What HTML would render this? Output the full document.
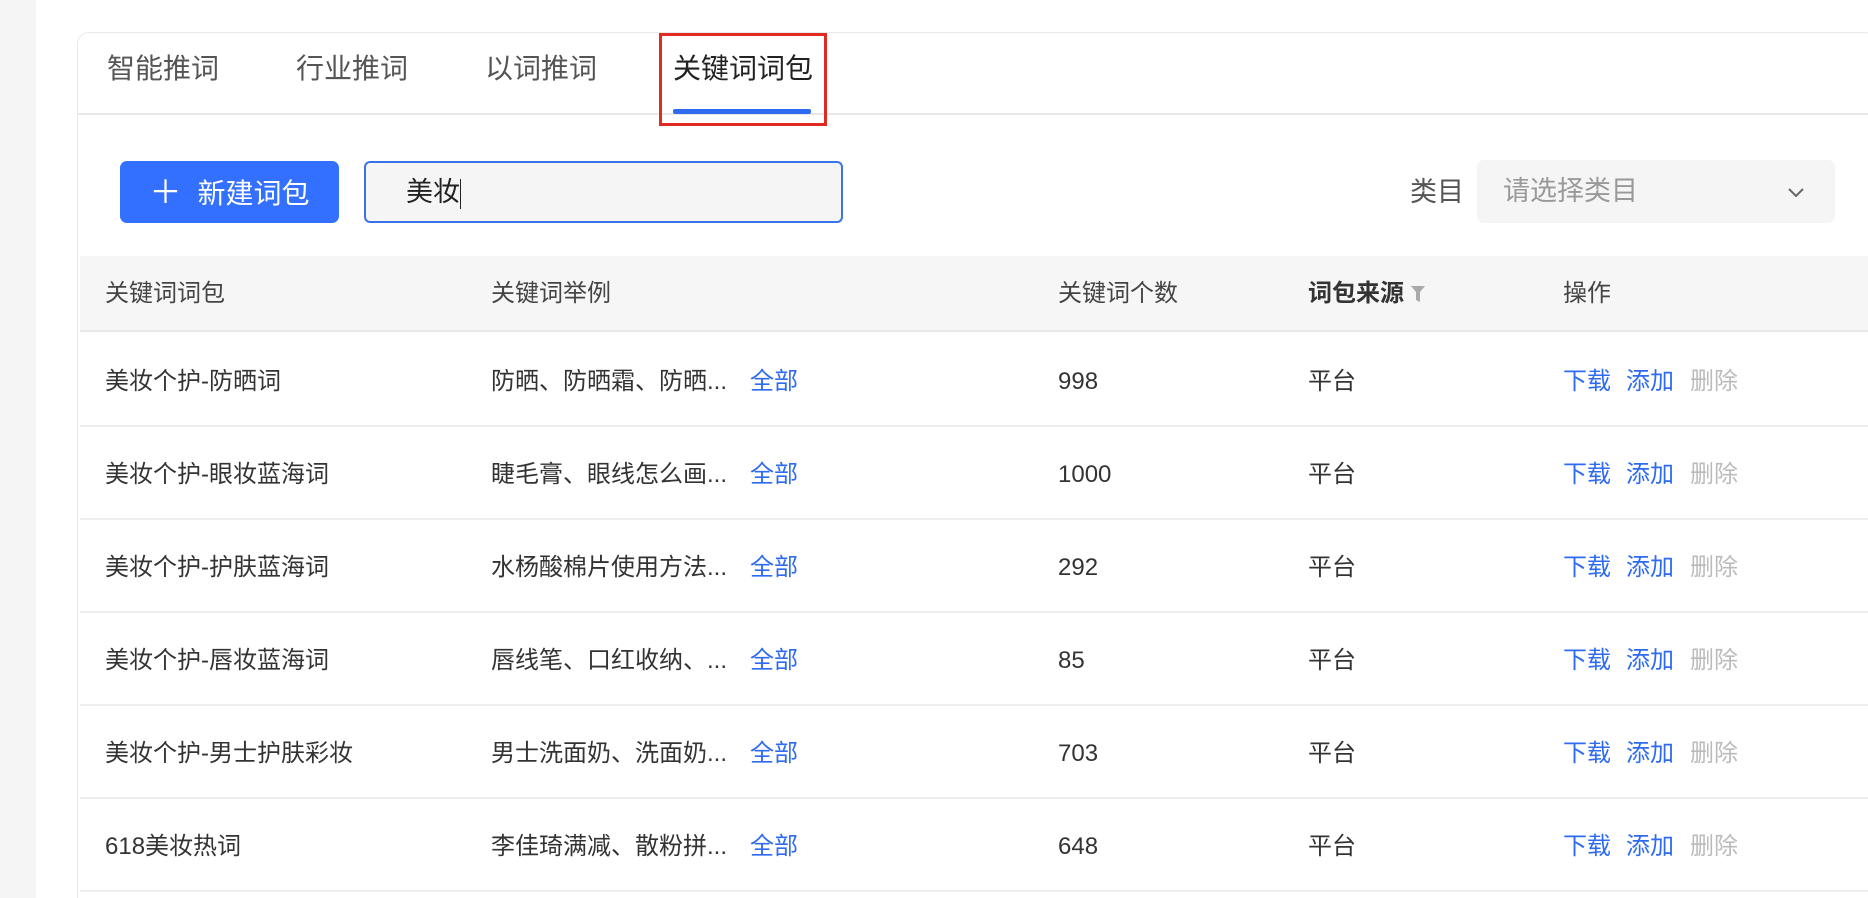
<!DOCTYPE html>
<html style="overflow:hidden;height:898px"><head><meta charset="utf-8"><style>
*{margin:0;padding:0;box-sizing:border-box}
body{width:1868px;height:898px;background:#fff;font-family:"Liberation Sans","Noto Sans CJK SC",sans-serif;color:#333;position:relative;overflow:hidden}
.abs{position:absolute}
.strip{left:0;top:0;width:36px;height:898px;background:#f5f5f5}
.card{left:77px;top:32px;width:1800px;height:866px;border:1.5px solid #eaeaea;border-bottom:none;border-radius:12px 12px 0 0;background:#fff}
.tab{top:49px;font-size:28px;color:#555;line-height:40px}
.tabline{left:78px;top:113px;width:1800px;height:2px;background:#e8e8e8}
.ul{left:673px;top:109px;width:138px;height:5px;background:#2f6bf0;border-radius:2px}
.red{left:659px;top:33px;width:168px;height:93px;border:3px solid #e02a22}
.btn{left:120px;top:161px;width:219px;height:62px;background:#3370ff;border-radius:7px;color:#fff;font-size:28px;line-height:62px;text-align:center}
.inp{left:364px;top:161px;width:479px;height:62px;background:#f5f5f5;border:2px solid #3a72e8;border-radius:6px;font-size:27px;line-height:58px;padding-left:40px;color:#222}
.sel{left:1477px;top:160px;width:358px;height:63px;background:#f5f5f5;border-radius:7px;font-size:27px;line-height:63px;padding-left:26px;color:#999}
.th{left:80px;top:256px;width:1800px;height:76px;background:#f6f6f6;border-bottom:2px solid #e8e8e8}
.h{top:278px;font-size:24px;color:#444;line-height:32px}
.c{font-size:24px;line-height:32px;color:#333}
.row{left:80px;width:1800px;height:2px;background:#eeeeee}
.b{color:#2f6bf0}.g{color:#bbb}
</style></head><body>
<div class="abs strip"></div>
<div class="abs card"></div>
<div class="abs tab" style="left:107px">智能推词</div>
<div class="abs tab" style="left:296px">行业推词</div>
<div class="abs tab" style="left:485px">以词推词</div>
<div class="abs tab" style="left:673px;color:#222">关键词词包</div>
<div class="abs tabline"></div>
<div class="abs ul"></div>
<div class="abs red"></div>
<div class="abs btn"><span style="font-size:32px;margin-right:16px">＋</span>新建词包</div>
<div class="abs inp">美妆<span style="display:inline-block;width:1px;height:30px;background:#222;vertical-align:middle"></span></div>
<div class="abs" style="left:1410px;top:176px;font-size:27px;line-height:32px;color:#555">类目</div>
<div class="abs sel">请选择类目</div>
<svg class="abs" style="left:1786px;top:186px" width="20" height="14" viewBox="0 0 20 14"><path d="M3 3 L10 10 L17 3" fill="none" stroke="#666" stroke-width="2"/></svg>
<div class="abs th"></div>
<div class="abs h" style="left:105px">关键词词包</div>
<div class="abs h" style="left:491px">关键词举例</div>
<div class="abs h" style="left:1058px">关键词个数</div>
<div class="abs h" style="left:1308px;font-weight:bold;color:#333">词包来源</div>
<svg class="abs" style="left:1410px;top:285px" width="16" height="18" viewBox="0 0 16 18"><path d="M1 1 H15 L10 7 V17 L6 15 V7 Z" fill="#aaa"/></svg>
<div class="abs h" style="left:1563px">操作</div>

<div class="abs c" style="left:105px;top:366px">美妆个护-防晒词</div>
<div class="abs c" style="left:491px;top:366px">防晒、防晒霜、防晒...</div>
<div class="abs c b" style="left:750px;top:366px">全部</div>
<div class="abs c" style="left:1058px;top:366px">998</div>
<div class="abs c" style="left:1308px;top:366px">平台</div>
<div class="abs c b" style="left:1563px;top:366px">下载</div><div class="abs c b" style="left:1626px;top:366px">添加</div><div class="abs c g" style="left:1690px;top:366px">删除</div>
<div class="abs row" style="top:425px"></div>

<div class="abs c" style="left:105px;top:459px">美妆个护-眼妆蓝海词</div>
<div class="abs c" style="left:491px;top:459px">睫毛膏、眼线怎么画...</div>
<div class="abs c b" style="left:750px;top:459px">全部</div>
<div class="abs c" style="left:1058px;top:459px">1000</div>
<div class="abs c" style="left:1308px;top:459px">平台</div>
<div class="abs c b" style="left:1563px;top:459px">下载</div><div class="abs c b" style="left:1626px;top:459px">添加</div><div class="abs c g" style="left:1690px;top:459px">删除</div>
<div class="abs row" style="top:518px"></div>

<div class="abs c" style="left:105px;top:552px">美妆个护-护肤蓝海词</div>
<div class="abs c" style="left:491px;top:552px">水杨酸棉片使用方法...</div>
<div class="abs c b" style="left:750px;top:552px">全部</div>
<div class="abs c" style="left:1058px;top:552px">292</div>
<div class="abs c" style="left:1308px;top:552px">平台</div>
<div class="abs c b" style="left:1563px;top:552px">下载</div><div class="abs c b" style="left:1626px;top:552px">添加</div><div class="abs c g" style="left:1690px;top:552px">删除</div>
<div class="abs row" style="top:611px"></div>

<div class="abs c" style="left:105px;top:645px">美妆个护-唇妆蓝海词</div>
<div class="abs c" style="left:491px;top:645px">唇线笔、口红收纳、...</div>
<div class="abs c b" style="left:750px;top:645px">全部</div>
<div class="abs c" style="left:1058px;top:645px">85</div>
<div class="abs c" style="left:1308px;top:645px">平台</div>
<div class="abs c b" style="left:1563px;top:645px">下载</div><div class="abs c b" style="left:1626px;top:645px">添加</div><div class="abs c g" style="left:1690px;top:645px">删除</div>
<div class="abs row" style="top:704px"></div>

<div class="abs c" style="left:105px;top:738px">美妆个护-男士护肤彩妆</div>
<div class="abs c" style="left:491px;top:738px">男士洗面奶、洗面奶...</div>
<div class="abs c b" style="left:750px;top:738px">全部</div>
<div class="abs c" style="left:1058px;top:738px">703</div>
<div class="abs c" style="left:1308px;top:738px">平台</div>
<div class="abs c b" style="left:1563px;top:738px">下载</div><div class="abs c b" style="left:1626px;top:738px">添加</div><div class="abs c g" style="left:1690px;top:738px">删除</div>
<div class="abs row" style="top:797px"></div>

<div class="abs c" style="left:105px;top:831px">618美妆热词</div>
<div class="abs c" style="left:491px;top:831px">李佳琦满减、散粉拼...</div>
<div class="abs c b" style="left:750px;top:831px">全部</div>
<div class="abs c" style="left:1058px;top:831px">648</div>
<div class="abs c" style="left:1308px;top:831px">平台</div>
<div class="abs c b" style="left:1563px;top:831px">下载</div><div class="abs c b" style="left:1626px;top:831px">添加</div><div class="abs c g" style="left:1690px;top:831px">删除</div>
<div class="abs row" style="top:890px"></div>
</body></html>
